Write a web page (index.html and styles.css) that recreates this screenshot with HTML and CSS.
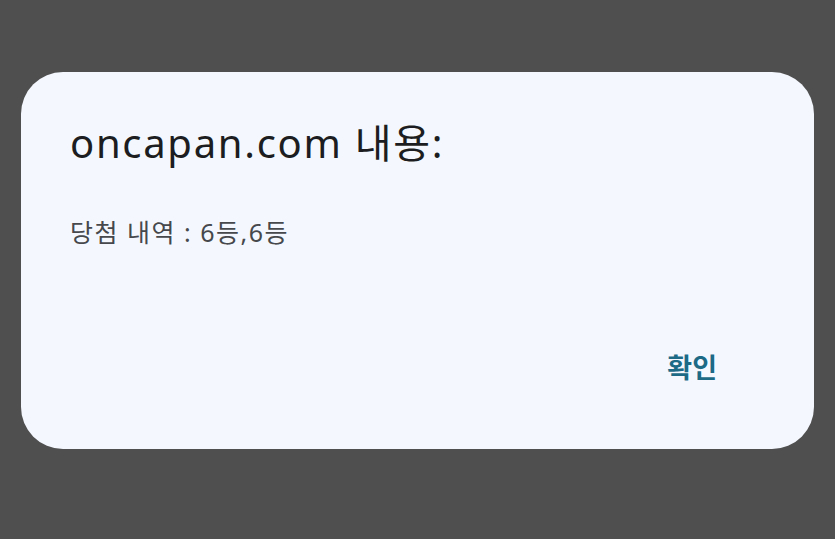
FILE: index.html
```html
<!DOCTYPE html>
<html lang="ko">
<head>
<meta charset="utf-8">
<link rel="stylesheet" href="styles.css">
</head>
<body>
<div class="screen">
  <div class="dialog">
    <h1 class="title">oncapan.com 내용:</h1>
    <p class="message">당첨 내역 : 6등,6등</p>
    <div class="actions">
      <button class="ok">확인</button>
    </div>
  </div>
</div>
</body>
</html>
```
FILE: styles.css
```css
html, body {
  margin: 0;
  padding: 0;
  background: #4f4f4f;
}
.screen {
  width: 835px;
  height: 539px;
  padding: 72px 21px 0 21px;
  box-sizing: border-box;
}
.dialog {
  width: 793px;
  height: 377px;
  box-sizing: border-box;
  background: #f4f8fe;
  border-radius: 42px;
  padding: 46px 97px 0 49px;
  display: flex;
  flex-direction: column;
  font-family: "Noto Sans", "Noto Sans CJK KR", sans-serif;
}
.title {
  margin: 0;
  font-size: 40px;
  font-weight: 400;
  color: #1c1d20;
  letter-spacing: 1.7px;
  line-height: 50px;
}
.message {
  margin: 0;
  margin-top: 48px;
  font-size: 25px;
  color: #46484c;
  line-height: 32px;
  letter-spacing: 1.5px;
}
.actions {
  display: flex;
  justify-content: flex-end;
  margin-top: 102px;
}
.ok {
  background: none;
  border: none;
  padding: 0;
  font-family: "Noto Sans CJK KR", sans-serif;
  font-size: 27px;
  font-weight: 700;
  color: #1c6a86;
  line-height: 34px;
}
```
